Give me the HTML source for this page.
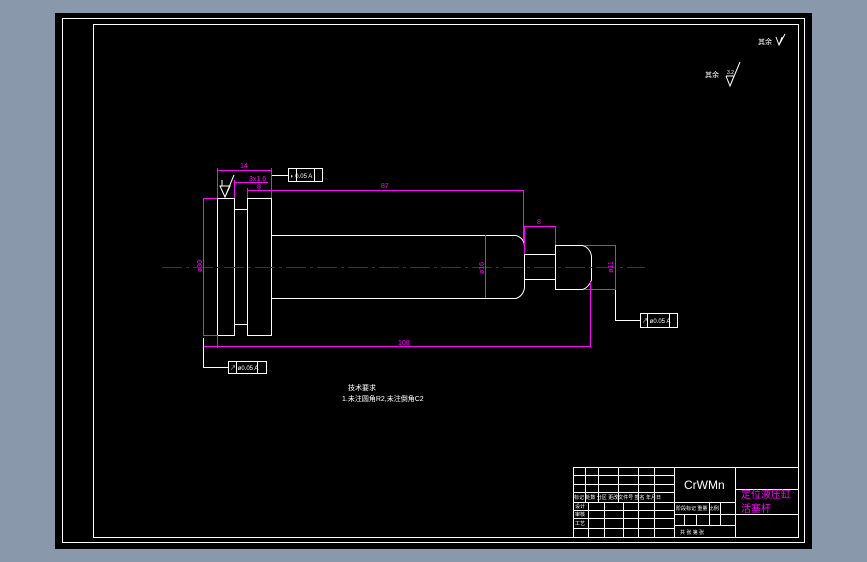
<!DOCTYPE html>
<html><head><meta charset="utf-8"><style>
html,body{margin:0;padding:0;width:867px;height:562px;overflow:hidden;background:#8a98ab}
svg{position:absolute;left:0;top:0}
text{font-family:"Liberation Sans","Noto Sans CJK SC",sans-serif}
</style></head><body>
<svg width="867" height="562" viewBox="0 0 867 562">
<rect x="55" y="13" width="757" height="536" fill="#000"/>
<g fill="none" stroke="#fff" stroke-width="1">
<rect x="62.5" y="18.5" width="742" height="524"/>
<rect x="93.5" y="24.5" width="705" height="513"/>
<rect x="217.5" y="198.5" width="17" height="137"/>
<rect x="234.5" y="209.5" width="13" height="115"/>
<rect x="247.5" y="198.5" width="24" height="137"/>
<path d="M271.5 235.5 H516 Q524 238 524.5 246 V288 Q523 296 516 298.5 H271.5"/>
<rect x="524.5" y="254.5" width="31" height="25"/>
<path d="M555.5 245.5 H583 Q590 248 591.5 256 V280 Q589 287 583 289.5 H555.5 Z"/>
<path d="M271 175.5 H288"/>
<rect x="288.5" y="168.5" width="34" height="13"/>
<path d="M296.5 168v13 M314.5 168v13"/>
<path d="M203.5 338 V367.5 H228"/>
<rect x="228.5" y="361.5" width="38" height="12"/>
<path d="M236.5 361v12 M257.5 361v12"/>
<path d="M615.5 289 V320.5 H640"/>
<rect x="640.5" y="313.5" width="37" height="14"/>
<path d="M647.5 313v14 M669.5 313v14"/>
<path d="M220 186 L225 197 L230 186 Z M225 197 L234 175 M222 180 V186"/>
<path d="M726 76 L730 86 L734 76 M730 86 L740 62 M726 76 H734"/>
<path d="M776 37 L779 45 L782 37 M779 45 L785 34"/>
<rect x="573.5" y="467.5" width="225" height="70"/>
<path d="M573 475.5H674 M573 484.5H674 M573 492.5H674 M573 502.5H735 M573 510.5H674 M573 518.5H674 M573 528.5H674 M674 514.5H798 M674 525.5H735 M735 489.5H798"/>
<path d="M585.5 467V502 M598.5 467V502 M618.5 467V502 M588.5 502V537 M604.5 502V537 M623.5 502V537 M638.5 467V537 M654.5 467V537 M674.5 467V537 M735.5 467V537 M709.5 502V525 M720.5 502V525 M684.5 514V525 M696.5 514V525"/>
</g>
<path d="M162 267.5 H645" stroke="#2020d0" stroke-width="1" stroke-dasharray="20,4,3,4"/>
<g fill="none" stroke="#f0f" stroke-width="1">
<path d="M217.5 168V198 M271.5 168V198 M217 170.5H272"/>
<path d="M234 182.5H268 M234.5 180V198"/>
<path d="M247 190.5H523 M523.5 190V240 M247.5 188V198"/>
<path d="M524 226.5H555 M524.5 226V254 M555.5 226V245"/>
<path d="M485.5 235V298"/>
<path d="M615.5 245V289 M584 245.5H616 M584 289.5H616"/>
<path d="M590.5 282V346 M204 346.5H591 M217.5 335V348"/>
<path d="M203.5 198V335 M203 198.5H217 M203 335.5H217"/>
</g>
<g fill="#f0f" font-size="7">
<text x="240" y="168">14</text>
<text x="249" y="181">3x1.6</text>
<text x="257" y="189">8</text>
<text x="381" y="188">87</text>
<text x="537" y="224">8</text>
<text x="398" y="345">108</text>
<text transform="translate(484 268) rotate(-90)" text-anchor="middle">ø16</text>
<text transform="translate(613 267) rotate(-90)" text-anchor="middle">ø11</text>
<text transform="translate(202 266) rotate(-90)" text-anchor="middle">ø30</text>
<text x="741" y="498" font-size="10">定位液压缸</text>
<text x="741" y="512" font-size="10">活塞杆</text>
</g>
<g fill="#fff" font-size="6">
<text x="290" y="178">◗ 0.05 A</text>
<text x="230" y="370">↗ ø0.05 A</text>
<text x="642" y="323">↗ ø0.05 A</text>
<text x="348" y="390" font-size="7">技术要求</text>
<text x="342" y="401" font-size="7">1.未注圆角R2,未注倒角C2</text>
<text x="758" y="44" font-size="7">其余</text>
<text x="705" y="77" font-size="7">其余</text>
<text x="727" y="74" font-size="5">3.2</text>
<text x="684" y="489" font-size="12">CrWMn</text>
<text x="574" y="499" font-size="5">标记 处数 分区 更改文件号 签名 年月日</text>
<text x="575" y="508" font-size="5">设计</text>
<text x="575" y="516" font-size="5">审核</text>
<text x="575" y="525" font-size="5">工艺</text>
<text x="676" y="510" font-size="5">阶段标记 重量 比例</text>
<text x="680" y="534" font-size="5">共  张 第  张</text>
</g>
</svg>
</body></html>
